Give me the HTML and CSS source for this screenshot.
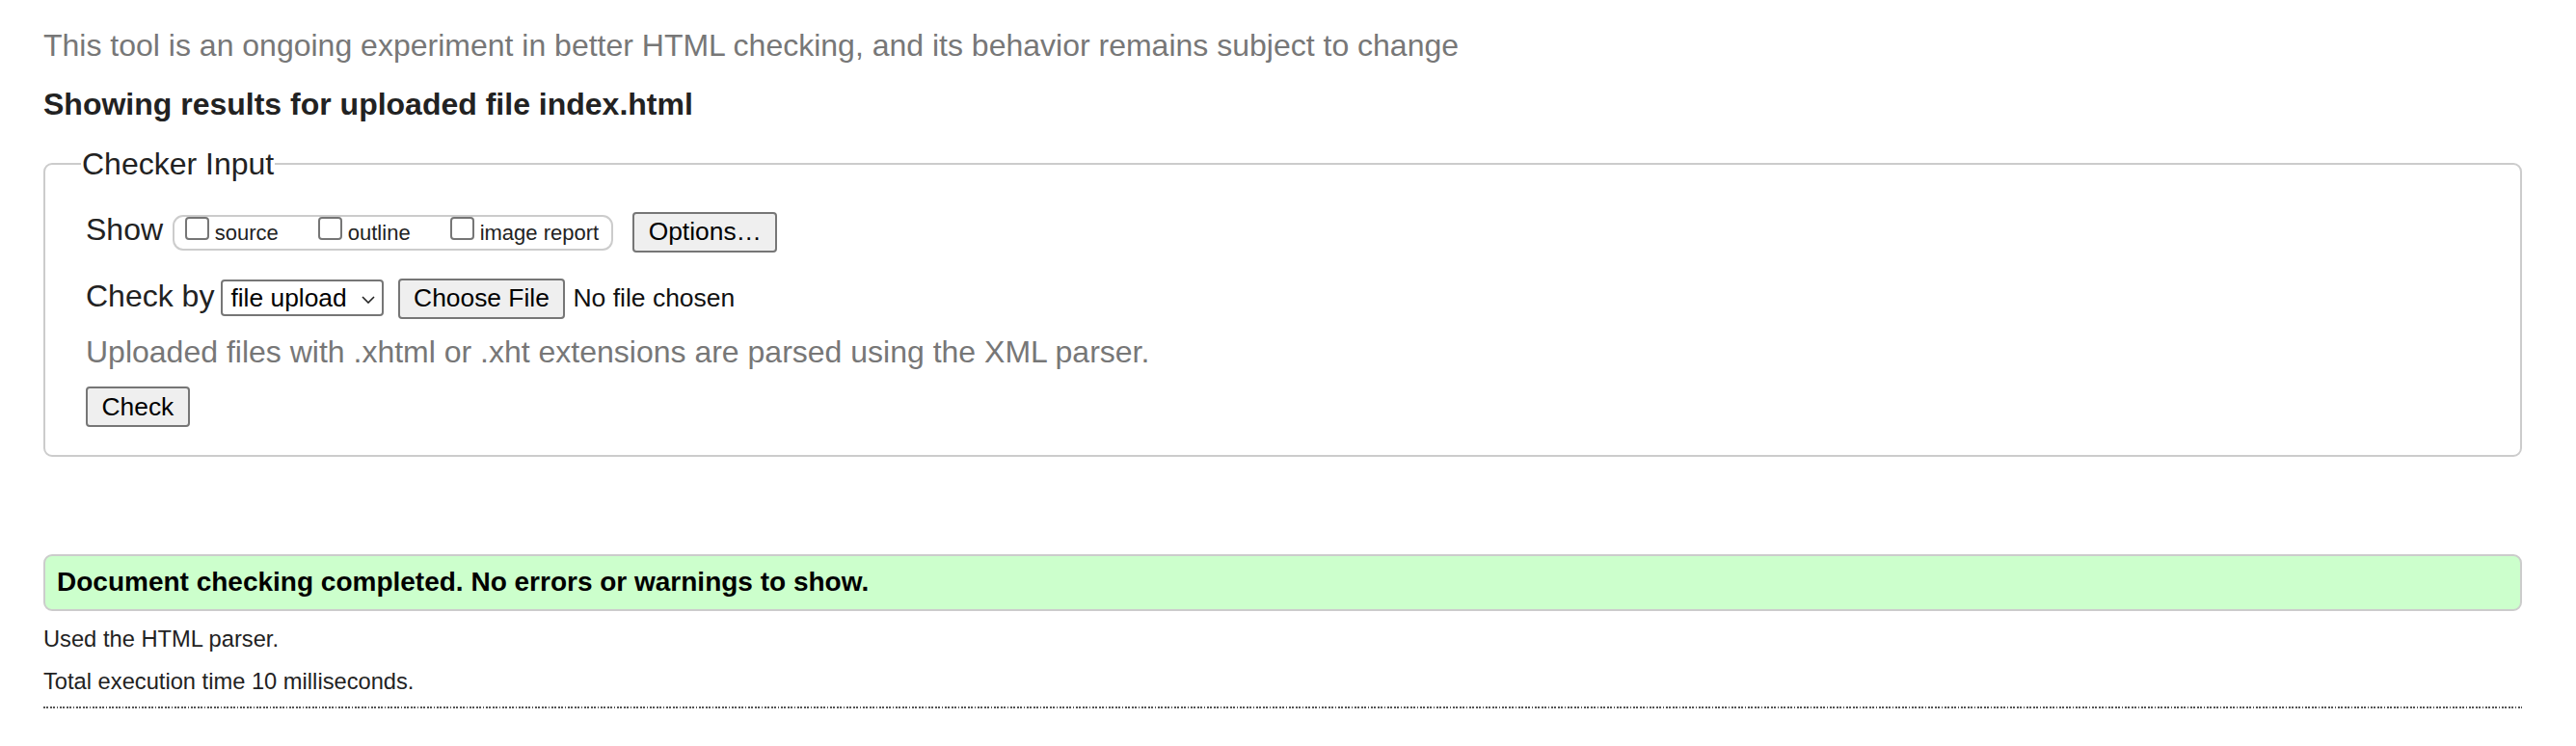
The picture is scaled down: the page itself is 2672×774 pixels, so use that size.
FILE: index.html
```html
<!DOCTYPE html>
<html lang="en">
<head>
<meta charset="utf-8">
<title>Showing results for uploaded file index.html - Nu Html Checker</title>
<link rel="stylesheet" href="styles.css">
</head>
<body>
<p class="intro">This tool is an ongoing experiment in better HTML checking, and its behavior remains subject to change</p>
<h2 class="title">Showing results for uploaded file index.html</h2>
<form class="checker">
  <fieldset class="fs">
    <legend class="fs-legend">Checker Input</legend>
    <div class="row row-show">
      <span class="row-label">Show</span>
      <span class="opts">
        <label class="opt"><input type="checkbox" class="cb"><span class="opt-text">source</span></label>
        <label class="opt"><input type="checkbox" class="cb"><span class="opt-text">outline</span></label>
        <label class="opt"><input type="checkbox" class="cb"><span class="opt-text">image report</span></label>
      </span>
      <button type="button" class="btn btn-options">Options…</button>
    </div>
    <div class="row row-by">
      <span class="row-label">Check by</span>
      <span class="select-wrap">
        <select class="select"><option>file upload</option></select>
        <svg class="chev" width="14" height="8" viewBox="0 0 14 8" aria-hidden="true"><path d="M1 1 L7 7 L13 1" fill="none" stroke="#222" stroke-width="1.6"/></svg>
      </span>
      <button type="button" class="btn btn-file">Choose File</button>
      <span class="file-status">No file chosen</span>
    </div>
    <p class="hint">Uploaded files with .xhtml or .xht extensions are parsed using the XML parser.</p>
    <div class="row row-submit"><button type="button" class="btn">Check</button></div>
  </fieldset>
</form>
<div class="result">Document checking completed. No errors or warnings to show.</div>
<p class="stats">Used the HTML parser.</p>
<p class="stats">Total execution time 10 milliseconds.</p>
<div class="rule"></div>
</body>
</html>
```
FILE: styles.css
```css
html {
  background: #fff;
}
body {
  margin: 0;
  padding: 0 56px 0 45px;
  font-family: "Liberation Sans", Arial, sans-serif;
  color: #222;
}
.intro {
  margin: 29px 0 0;
  font-size: 32px;
  line-height: 37px;
  color: #777;
}
.title {
  margin: 24px 0 0;
  font-size: 32px;
  line-height: 37px;
  font-weight: bold;
  color: #222;
}
.checker {
  margin: 24.75px 0 0;
}
.fs {
  margin: 0;
  padding: 0 40px 28.7px 42px;
  border: 2px solid #ccc;
  border-radius: 9px;
  min-width: 0;
}
.fs-legend {
  padding: 0 1px;
  margin-left: -5px;
  font-size: 32px;
  line-height: 36px;
  color: #222;
}
.row {
  display: flex;
  align-items: baseline;
}
.row-show {
  margin-top: 31.8px;
}
.row-by {
  margin-top: 27px;
}
.row-submit {
  margin-top: 17.4px;
}
.row-label {
  font-size: 32px;
  line-height: 37px;
  color: #222;
}
.opts {
  display: inline-flex;
  align-items: baseline;
  box-sizing: border-box;
  height: 37px;
  margin-left: 9.5px;
  padding: 0 13px 0 11.7px;
  border: 2px solid #ccc;
  border-radius: 11px;
}
.opt {
  display: flex;
  align-items: baseline;
}
.opt + .opt {
  margin-left: 41.5px;
}
.cb {
  appearance: none;
  -webkit-appearance: none;
  box-sizing: border-box;
  width: 24.5px;
  height: 24.5px;
  margin: 0;
  border: 2px solid #767676;
  border-radius: 4px;
  background: #fff;
}
.opt-text {
  margin-left: 6px;
  font-size: 22px;
  line-height: 25px;
  color: #222;
}
.btn {
  box-sizing: border-box;
  height: 42px;
  padding: 0 14.5px;
  border: 2px solid #767676;
  border-radius: 4px;
  background: #efefef;
  color: #000;
  font-family: "Liberation Sans", Arial, sans-serif;
  font-size: 26.4px;
  line-height: 29px;
}
.btn-options {
  margin-left: 20px;
}
.select-wrap {
  position: relative;
  display: inline-block;
  margin-left: 7px;
}
.select {
  appearance: none;
  -webkit-appearance: none;
  box-sizing: border-box;
  width: 168.7px;
  height: 37.3px;
  margin: 0;
  padding: 0 0 0 8px;
  border: 2px solid #767676;
  border-radius: 4px;
  background: #fff;
  color: #000;
  font-family: "Liberation Sans", Arial, sans-serif;
  font-size: 26.4px;
}
.chev {
  position: absolute;
  right: 9.3px;
  top: 17px;
  pointer-events: none;
}
.btn-file {
  margin-left: 14.5px;
}
.file-status {
  margin-left: 8px;
  font-size: 26.5px;
  line-height: 29px;
  color: #111;
}
.hint {
  margin: 16.4px 0 0;
  font-size: 32px;
  line-height: 37px;
  color: #777;
}
.result {
  margin-top: 101.3px;
  padding: 10.5px 12px 12px;
  border: 2px solid #ccc;
  border-radius: 9px;
  background: #ccffcc;
  color: #000;
  font-size: 28px;
  line-height: 32px;
  font-weight: bold;
}
.stats {
  margin: 16.5px 0 0;
  font-size: 23.7px;
  line-height: 27px;
  color: #222;
}
.rule {
  margin-top: 12.5px;
  height: 2px;
  background: repeating-linear-gradient(to right, #555 0, #555 1.7px, transparent 1.7px, transparent 3.4px);
}
```
